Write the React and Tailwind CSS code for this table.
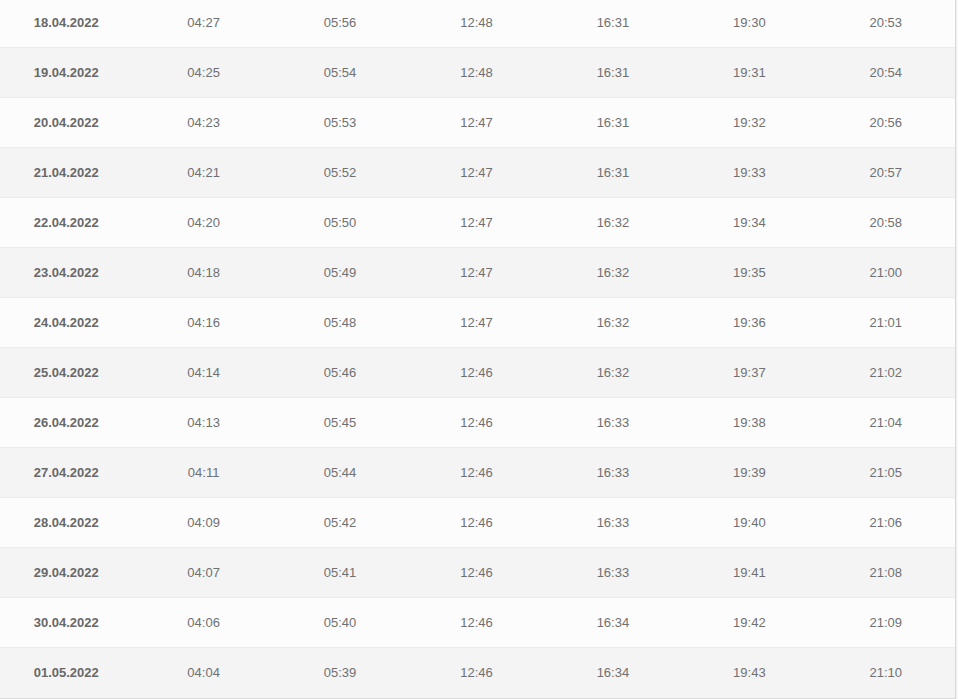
import React from 'react';

const rows = [
  ['18.04.2022', '04:27', '05:56', '12:48', '16:31', '19:30', '20:53'],
  ['19.04.2022', '04:25', '05:54', '12:48', '16:31', '19:31', '20:54'],
  ['20.04.2022', '04:23', '05:53', '12:47', '16:31', '19:32', '20:56'],
  ['21.04.2022', '04:21', '05:52', '12:47', '16:31', '19:33', '20:57'],
  ['22.04.2022', '04:20', '05:50', '12:47', '16:32', '19:34', '20:58'],
  ['23.04.2022', '04:18', '05:49', '12:47', '16:32', '19:35', '21:00'],
  ['24.04.2022', '04:16', '05:48', '12:47', '16:32', '19:36', '21:01'],
  ['25.04.2022', '04:14', '05:46', '12:46', '16:32', '19:37', '21:02'],
  ['26.04.2022', '04:13', '05:45', '12:46', '16:33', '19:38', '21:04'],
  ['27.04.2022', '04:11', '05:44', '12:46', '16:33', '19:39', '21:05'],
  ['28.04.2022', '04:09', '05:42', '12:46', '16:33', '19:40', '21:06'],
  ['29.04.2022', '04:07', '05:41', '12:46', '16:33', '19:41', '21:08'],
  ['30.04.2022', '04:06', '05:40', '12:46', '16:34', '19:42', '21:09'],
  ['01.05.2022', '04:04', '05:39', '12:46', '16:34', '19:43', '21:10'],
];

export default function App() {
  return (
    <div className="w-[958px] h-[699px] overflow-hidden bg-white font-['Liberation_Sans',Arial,sans-serif] text-[13px]">
      {/* Prayer times table, scrolled slightly past its top */}
      <div className="w-[956px] -mt-[2px] border-r border-b border-[#d9d9d9] shadow-[1px_1px_2px_rgba(0,0,0,0.08)]">
        {rows.map((r, i) => (
          <div
            key={r[0]}
            className={`grid grid-cols-7 h-[50px] items-center border-b border-[#ebebeb] last:border-b-0 ${i % 2 === 0 ? 'bg-[#fcfcfc]' : 'bg-[#f4f4f4]'}`}
          >
            {r.map((c, j) => (
              <div
                key={j}
                className={j === 0 ? 'text-center font-bold text-[#686868] -translate-x-[2px]' : 'text-center text-[#707070] -translate-x-[1px]'}
              >
                {c}
              </div>
            ))}
          </div>
        ))}
      </div>
    </div>
  );
}
